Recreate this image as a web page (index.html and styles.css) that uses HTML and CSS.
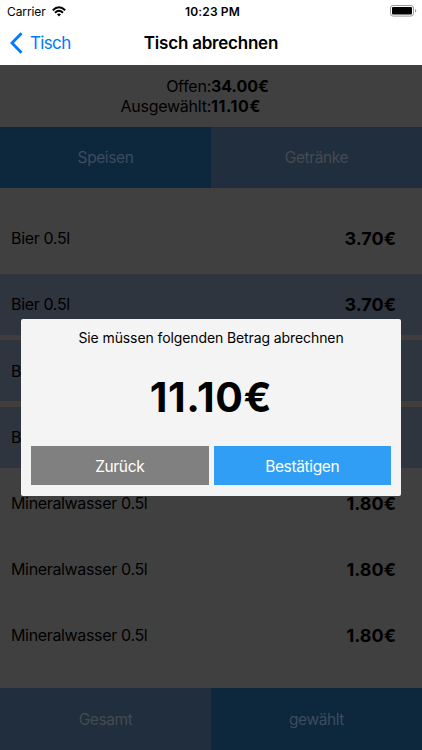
FILE: index.html
```html
<!DOCTYPE html>
<html lang="de">
<head>
<meta charset="utf-8">
<title>Tisch abrechnen</title>
<link rel="stylesheet" href="styles.css">
</head>
<body>
<div class="app">
  <header class="header">
    <div class="status">
      <div class="carrier"><span class="carrier-name">Carrier</span>
        <svg class="wifi" width="14" height="11" viewBox="0 0 14 11" fill="none" stroke="#000" stroke-width="1.9"><path d="M.8 4.2Q7-1.7 13.2 4.2"/><path d="M3 6.7Q7 3 11 6.7"/><path d="M4.9 8.3Q7 6.6 9.1 8.3L7 10.5Z" fill="#000" stroke="none"/></svg>
      </div>
      <span class="time">10:23 PM</span>
      <svg class="battery" width="27" height="12" viewBox="0 0 27 12"><rect x=".5" y=".5" width="23" height="10.6" rx="2.6" fill="#fff" stroke="#999"/><rect x="2" y="2" width="20" height="7.6" rx="1"/><path d="M25 4v3.6q1.3-.6 1.3-1.8T25 4" fill="#999"/></svg>
    </div>
    <nav class="nav">
      <div class="back"><svg width="13" height="22" viewBox="0 0 13 22" fill="none" stroke="#007aff" stroke-width="2.8"><path d="M11.5 1.3 2 11l9.5 9.7"/></svg><span class="back-label">Tisch</span></div>
      <h1 class="title">Tisch abrechnen</h1>
    </nav>
  </header>
  <main class="content">
    <div class="summary">
      <span class="label">Offen:</span><b class="sum">34.00€</b>
      <span class="label">Ausgewählt:</span><b class="sum chosen">11.10€</b>
    </div>
    <div class="tabs"><div class="tab active">Speisen</div><div class="tab">Getränke</div></div>
    <div class="list">
      <div class="row"><span>Bier 0.5l</span><b class="price">3.70€</b></div>
      <div class="row selected"><span>Bier 0.5l</span><b class="price">3.70€</b></div>
      <div class="row selected"><span>Bier 0.5l</span><b class="price">3.70€</b></div>
      <div class="row selected"><span>Bier 0.5l</span><b class="price">3.70€</b></div>
      <div class="row"><span>Mineralwasser 0.5l</span><b class="price">1.80€</b></div>
      <div class="row"><span>Mineralwasser 0.5l</span><b class="price">1.80€</b></div>
      <div class="row"><span>Mineralwasser 0.5l</span><b class="price">1.80€</b></div>
    </div>
    <div class="tabs bottom"><div class="tab">Gesamt</div><div class="tab active">gewählt</div></div>
  </main>
  <section class="dialog" role="dialog">
    <p class="message">Sie müssen folgenden Betrag abrechnen</p>
    <div class="amount">11.10€</div>
    <div class="actions"><button class="button">Zurück</button><button class="button confirm">Bestätigen</button></div>
  </section>
</div>
</body>
</html>
```
FILE: styles.css
```css
* { box-sizing: border-box; }
body { margin: 0; font-family: Inter, "Liberation Sans", sans-serif; color: #000; }
.app { position: relative; width: 422px; height: 750px; overflow: hidden; background: #404040; display: flex; flex-direction: column; }
.header { height: 65px; background: #fff; flex: none; }
.status { height: 22px; display: grid; grid-template-columns: 1fr auto 1fr; align-items: center; padding: 0 5px 0 7px; }
.carrier { display: flex; align-items: center; gap: 6px; font-size: 12px; letter-spacing: -.1px; }
.time { font-size: 12px; font-weight: 600; letter-spacing: .15px; padding-left: 1px; }
.battery { justify-self: end; }
.nav { height: 43px; display: grid; grid-template-columns: 1fr auto 1fr; align-items: center; padding: 0 10px; }
.back { display: flex; align-items: center; gap: 7px; color: #007aff; font-size: 17px; letter-spacing: -.65px; margin-top: -2px; }
.title { margin: -2px 0 0; font-size: 17px; font-weight: 600; letter-spacing: -.22px; }
.content { flex: 1; display: flex; flex-direction: column; }
.summary { height: 62px; flex: none; display: grid; grid-template-columns: 1fr 1fr; grid-auto-rows: 20px; line-height: 20px; padding-top: 10.5px; font-size: 16px; }
.label { text-align: right; letter-spacing: -.25px; }
.sum { font-weight: 700; }
.chosen { letter-spacing: .6px; }
.tabs { display: flex; height: 61px; flex: none; }
.bottom { height: 62px; }
.tab { flex: 1; display: flex; align-items: center; justify-content: center; padding-bottom: 1px; background: #202e3d; color: #444b54; font-size: 15.5px; letter-spacing: -.4px; }
.bottom .tab { padding-bottom: 0; }
.tab.active { background: #0d273c; color: #3c4d5c; }
.list { flex: none; display: grid; grid-auto-rows: 61px; gap: 5.2px; padding-top: 20px; height: 500px; }
.row { display: flex; align-items: center; justify-content: space-between; padding: 0 26px .5px 11px; font-size: 16px; letter-spacing: -.34px; }
.selected { background: #2f353e; }
.selected + .selected { box-shadow: 0 -5.2px #403d3c; }
.price { font-size: 18px; font-weight: 700; letter-spacing: 0; }
.dialog { position: absolute; left: 21px; top: 319px; width: 380px; height: 177px; border-radius: 2px; background: #f4f4f4; padding: 10px 10px 10.6px; display: flex; flex-direction: column; }
.message { margin: 0; font-size: 14px; line-height: 18px; text-align: center; letter-spacing: -.1px; }
.amount { flex: 1; display: flex; align-items: center; justify-content: center; font-size: 41px; font-weight: 700; letter-spacing: .65px; }
.actions { display: flex; gap: 5px; }
.button { flex: 1; height: 39px; border: 0; padding: 1px 0 0; background: #808080; color: #fff; font: 15.5px Inter, sans-serif; letter-spacing: -.35px; }
.confirm { background: #319ef5; }
```
